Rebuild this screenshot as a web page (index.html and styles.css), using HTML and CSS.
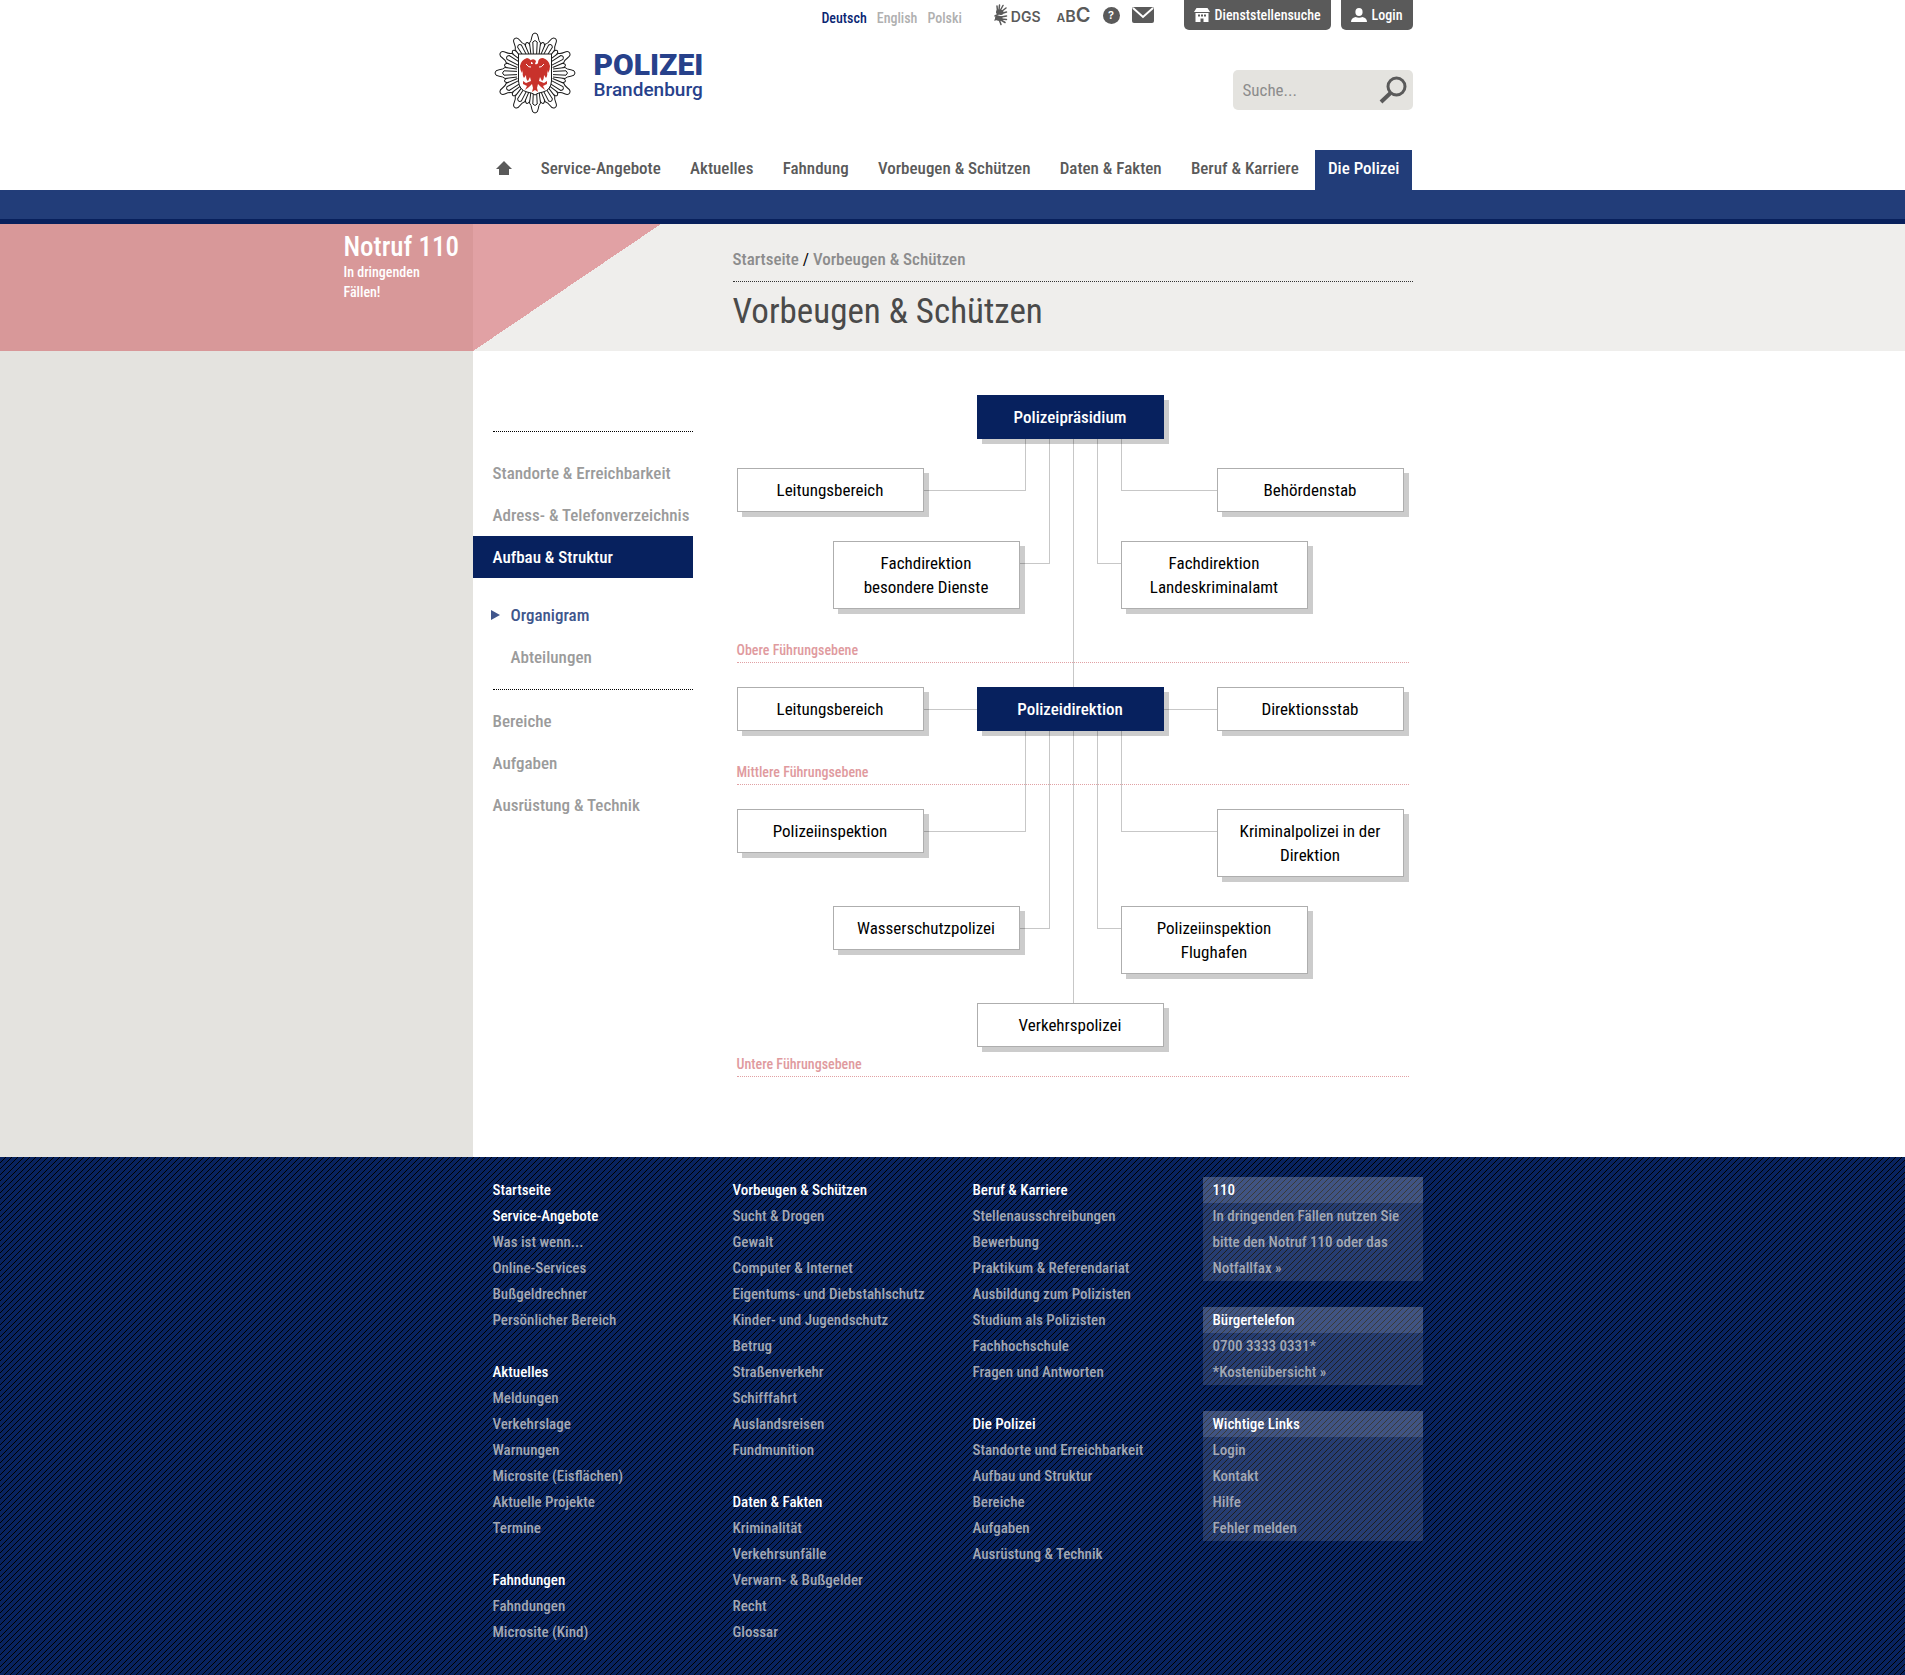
FILE: index.html
```html
<!DOCTYPE html>
<html lang="de">
<head>
<meta charset="utf-8">
<meta name="viewport" content="width=device-width, initial-scale=1">
<title>Organigramm – Polizei Brandenburg</title>
<link rel="stylesheet" href="styles.css">
</head>
<body>

<header class="site-header">
  <div class="wrap header-top">
    <a class="logo" href="#">
      <svg class="star" viewBox="-42 -42 84 84" width="84" height="84" aria-hidden="true">
        <defs>
          <path id="ray-small" d="M-5 -18 L-1.800 -30 Q0 -33 1.800 -30 L5 -18"/>
          <path id="ray-big" d="M-4 -18 L-5.500 -30 Q-3.600 -32 -3.200 -36 Q-2.800 -40 0 -40 Q2.800 -40 3.200 -36 Q3.600 -32 5.500 -30 L4 -18 M-1.600 -18 L-2.200 -31 Q0 -34 2.200 -31 L1.600 -18"/>
        </defs>
        <g fill="#fff" stroke="#1a1a1a" stroke-width="1">
          <g>
            <use href="#ray-small" transform="rotate(15)"/><use href="#ray-small" transform="rotate(45)"/><use href="#ray-small" transform="rotate(75)"/><use href="#ray-small" transform="rotate(105)"/><use href="#ray-small" transform="rotate(135)"/><use href="#ray-small" transform="rotate(165)"/><use href="#ray-small" transform="rotate(195)"/><use href="#ray-small" transform="rotate(225)"/><use href="#ray-small" transform="rotate(255)"/><use href="#ray-small" transform="rotate(285)"/><use href="#ray-small" transform="rotate(315)"/><use href="#ray-small" transform="rotate(345)"/>
          </g>
          <g>
            <use href="#ray-big"/><use href="#ray-big" transform="rotate(30)"/><use href="#ray-big" transform="rotate(60)"/><use href="#ray-big" transform="rotate(90)"/><use href="#ray-big" transform="rotate(120)"/><use href="#ray-big" transform="rotate(150)"/><use href="#ray-big" transform="rotate(180)"/><use href="#ray-big" transform="rotate(210)"/><use href="#ray-big" transform="rotate(240)"/><use href="#ray-big" transform="rotate(270)"/><use href="#ray-big" transform="rotate(300)"/><use href="#ray-big" transform="rotate(330)"/>
          </g>
          <path d="M-16.500 -19 H16.500 V8 Q16 17 8 19 Q2 20 0 22 Q-2 20 -8 19 Q-16 17 -16.500 8 Z"/>
        </g>
        <path fill="#c8322b" d="M-4 -13 Q-1 -15 1 -12 L0 -9 Q2 -8 3 -10 Q3 -15 8 -15 Q14 -13 15 -7 Q15 -3 13 0 L12 -3 Q13 2 11 5 L9 2 Q9 7 7 8 L5 4 L4 8 L9 10 L12 8 L12 11 L8 13 L10 17 L6 14 L3 11 L2 15 L3 19 L0 17 L-3 19 L-2 15 L-3 11 L-6 14 L-10 17 L-8 13 L-12 11 L-12 8 L-9 10 L-4 8 L-5 4 L-7 8 Q-9 7 -9 2 L-11 5 Q-13 2 -12 -3 L-13 0 Q-15 -3 -15 -7 Q-14 -13 -8 -15 Q-3 -14 -4 -9 L-2 -9 L-3 -11 L-6 -11 Z"/>
        <path fill="none" stroke="#fff" stroke-width="1" d="M-9 -9 Q-6 -5 -4 -6 M9 -9 Q6 -5 4 -6"/>
      </svg>
      <span class="wordmark"><strong>POLIZEI</strong><span>Brandenburg</span></span>
    </a>

    <div class="tools">
      <div class="meta">
        <nav class="languages" aria-label="Sprache">
          <a class="current" href="#">Deutsch</a>
          <a href="#">English</a>
          <a href="#">Polski</a>
        </nav>
        <div class="services">
          <a class="dgs" href="#">
            <svg width="14" height="22" viewBox="0 0 14 22" aria-hidden="true" fill="none" stroke="#5a5a5a" stroke-linecap="round">
              <path stroke-width="5" d="M4.500 8 L7 8.500 M3.500 14 L6 14.500"/>
              <path stroke-width="1.500" d="M3.500 7 L3 2 M5 6 L5.500 1 M6.500 6 L9 1.500 M7.500 7.500 L12 4 M7.500 9.500 L12.500 8 M4 10.500 L1 12 M7 13 L12.500 12 M7 15 L12.500 15.500 M7 16 L11 18.500 M5.500 16.500 L7 20.500 M4 14 L1 16"/>
            </svg>
            <span>DGS</span>
          </a>
          <a class="abc" href="#" aria-label="Schriftgröße"><small>A</small><span>B</span><big>C</big></a>
          <a class="help" href="#" aria-label="Hilfe">?</a>
          <a class="mail" href="#" aria-label="Kontakt">
            <svg width="22" height="16" viewBox="0 0 22 16" aria-hidden="true"><rect width="22" height="16" rx="2" fill="#5a5a5a"/><path d="M1 1 L11 10 L21 1" fill="none" stroke="#fff" stroke-width="2"/></svg>
          </a>
        </div>
        <div class="tabs">
          <a href="#">
            <svg width="16" height="14" viewBox="0 0 16 14" aria-hidden="true" fill="#fff"><path d="M2.500 0 H13.500 L16 4 H0 Z"/><path fill-rule="evenodd" d="M1.500 5 H14.500 V14 H9.500 V10.500 H6.500 V14 H1.500 Z M4 6.500 V8.500 H6 V6.500 Z M7 6.500 V8.500 H9 V6.500 Z M10 6.500 V8.500 H12 V6.500 Z"/></svg>
            Dienststellensuche
          </a>
          <a href="#">
            <svg width="16" height="14" viewBox="0 0 16 14" aria-hidden="true" fill="#fff"><ellipse cx="8" cy="4" rx="3.600" ry="4"/><path d="M0 14 Q0 10 4.500 9 Q8 10.500 11.500 9 Q16 10 16 14 Z"/></svg>
            Login
          </a>
        </div>
      </div>
      <form class="search" role="search">
        <input type="search" aria-label="Suche" placeholder="Suche...">
        <button type="submit" aria-label="Suchen">
          <svg width="28" height="28" viewBox="0 0 28 28" aria-hidden="true" fill="none" stroke="#5a5a5a"><circle cx="17.500" cy="10.500" r="8.500" stroke-width="3"/><path stroke-width="4" d="M11.500 17 L2 26"/></svg>
        </button>
      </form>
    </div>
  </div>

  <nav class="wrap main-nav" aria-label="Hauptnavigation">
    <a class="home" href="#" aria-label="Startseite"><svg width="16" height="14" viewBox="0 0 16 14" aria-hidden="true"><path fill="#5a5a5a" d="M8 0 L16 8 H13 V14 H3 V8 H0 Z"/></svg></a>
    <a href="#">Service-Angebote</a>
    <a href="#">Aktuelles</a>
    <a href="#">Fahndung</a>
    <a href="#">Vorbeugen &amp; Schützen</a>
    <a href="#">Daten &amp; Fakten</a>
    <a href="#">Beruf &amp; Karriere</a>
    <a class="active" href="#">Die Polizei</a>
  </nav>
</header>

<section class="banner">
  <aside class="emergency">
    <div>
      <strong>Notruf 110</strong>
      <p>In dringenden<br>Fällen!</p>
    </div>
  </aside>
  <div class="page-head">
    <div class="page-title">
      <nav class="breadcrumb" aria-label="Brotkrumen"><a href="#">Startseite</a> / <a href="#">Vorbeugen &amp; Schützen</a></nav>
      <h1>Vorbeugen &amp; Schützen</h1>
    </div>
  </div>
</section>

<div class="content">
  <div class="page">
    <nav class="side-nav" aria-label="Bereichsnavigation">
      <ul class="group">
        <li><a href="#">Standorte &amp; Erreichbarkeit</a></li>
        <li><a href="#">Adress- &amp; Telefonverzeichnis</a></li>
        <li class="active"><a href="#">Aufbau &amp; Struktur</a></li>
      </ul>
      <ul class="sub">
        <li class="current"><a href="#">Organigram</a></li>
        <li><a href="#">Abteilungen</a></li>
      </ul>
      <ul class="group rest">
        <li><a href="#">Bereiche</a></li>
        <li><a href="#">Aufgaben</a></li>
        <li><a href="#">Ausrüstung &amp; Technik</a></li>
      </ul>
    </nav>

    <main class="chart">
      <svg class="links" viewBox="0 0 672 682" width="672" height="682" aria-hidden="true" fill="none" stroke="#000" stroke-opacity=".22" shape-rendering="crispEdges">
        <path d="M288.500 44 V95.500 H187"/>
        <path d="M312.500 44 V168.500 H283"/>
        <path d="M336.500 44 V292"/>
        <path d="M360.500 44 V168.500 H384"/>
        <path d="M384.500 44 V95.500 H480"/>
        <path d="M187 314.500 H240 M427 314.500 H480"/>
        <path d="M288.500 336 V436.500 H187"/>
        <path d="M312.500 336 V533.500 H283"/>
        <path d="M336.500 336 V608"/>
        <path d="M360.500 336 V533.500 H384"/>
        <path d="M384.500 336 V436.500 H480"/>
      </svg>
      <a class="node centre lead row-1" href="#">Polizeipräsidium</a>
      <a class="node left row-2" href="#">Leitungsbereich</a>
      <a class="node right row-2" href="#">Behördenstab</a>
      <a class="node inner-left row-3" href="#">Fachdirektion<br>besondere Dienste</a>
      <a class="node inner-right row-3" href="#">Fachdirektion<br>Landeskriminalamt</a>
      <h2 class="level row-4">Obere Führungsebene</h2>
      <a class="node left row-5" href="#">Leitungsbereich</a>
      <a class="node centre lead row-5" href="#">Polizeidirektion</a>
      <a class="node right row-5" href="#">Direktionsstab</a>
      <h2 class="level row-6">Mittlere Führungsebene</h2>
      <a class="node left row-7" href="#">Polizeiinspektion</a>
      <a class="node right row-7" href="#">Kriminalpolizei in der<br>Direktion</a>
      <a class="node inner-left row-8" href="#">Wasserschutzpolizei</a>
      <a class="node inner-right row-8" href="#">Polizeiinspektion<br>Flughafen</a>
      <a class="node centre row-9" href="#">Verkehrspolizei</a>
      <h2 class="level last row-10">Untere Führungsebene</h2>
    </main>
  </div>
</div>

<footer class="site-footer">
  <div class="wrap footer-grid">
    <div class="links-col">
      <ul>
        <li><a class="head" href="#">Startseite</a></li>
        <li><a class="head" href="#">Service-Angebote</a></li>
        <li><a href="#">Was ist wenn...</a></li>
        <li><a href="#">Online-Services</a></li>
        <li><a href="#">Bußgeldrechner</a></li>
        <li><a href="#">Persönlicher Bereich</a></li>
      </ul>
      <ul>
        <li><a class="head" href="#">Aktuelles</a></li>
        <li><a href="#">Meldungen</a></li>
        <li><a href="#">Verkehrslage</a></li>
        <li><a href="#">Warnungen</a></li>
        <li><a href="#">Microsite (Eisflächen)</a></li>
        <li><a href="#">Aktuelle Projekte</a></li>
        <li><a href="#">Termine</a></li>
      </ul>
      <ul>
        <li><a class="head" href="#">Fahndungen</a></li>
        <li><a href="#">Fahndungen</a></li>
        <li><a href="#">Microsite (Kind)</a></li>
      </ul>
    </div>
    <div class="links-col">
      <ul>
        <li><a class="head" href="#">Vorbeugen &amp; Schützen</a></li>
        <li><a href="#">Sucht &amp; Drogen</a></li>
        <li><a href="#">Gewalt</a></li>
        <li><a href="#">Computer &amp; Internet</a></li>
        <li><a href="#">Eigentums- und Diebstahlschutz</a></li>
        <li><a href="#">Kinder- und Jugendschutz</a></li>
        <li><a href="#">Betrug</a></li>
        <li><a href="#">Straßenverkehr</a></li>
        <li><a href="#">Schifffahrt</a></li>
        <li><a href="#">Auslandsreisen</a></li>
        <li><a href="#">Fundmunition</a></li>
      </ul>
      <ul>
        <li><a class="head" href="#">Daten &amp; Fakten</a></li>
        <li><a href="#">Kriminalität</a></li>
        <li><a href="#">Verkehrsunfälle</a></li>
        <li><a href="#">Verwarn- &amp; Bußgelder</a></li>
        <li><a href="#">Recht</a></li>
        <li><a href="#">Glossar</a></li>
      </ul>
    </div>
    <div class="links-col">
      <ul>
        <li><a class="head" href="#">Beruf &amp; Karriere</a></li>
        <li><a href="#">Stellenausschreibungen</a></li>
        <li><a href="#">Bewerbung</a></li>
        <li><a href="#">Praktikum &amp; Referendariat</a></li>
        <li><a href="#">Ausbildung zum Polizisten</a></li>
        <li><a href="#">Studium als Polizisten</a></li>
        <li><a href="#">Fachhochschule</a></li>
        <li><a href="#">Fragen und Antworten</a></li>
      </ul>
      <ul>
        <li><a class="head" href="#">Die Polizei</a></li>
        <li><a href="#">Standorte und Erreichbarkeit</a></li>
        <li><a href="#">Aufbau und Struktur</a></li>
        <li><a href="#">Bereiche</a></li>
        <li><a href="#">Aufgaben</a></li>
        <li><a href="#">Ausrüstung &amp; Technik</a></li>
      </ul>
    </div>
    <div class="boxes">
      <section>
        <h2>110</h2>
        <p>In dringenden Fällen nutzen Sie<br>bitte den Notruf 110 oder das<br><a href="#">Notfallfax »</a></p>
      </section>
      <section>
        <h2>Bürgertelefon</h2>
        <p>0700 3333 0331*<br><a href="#">*Kostenübersicht »</a></p>
      </section>
      <section>
        <h2>Wichtige Links</h2>
        <ul>
          <li><a href="#">Login</a></li>
          <li><a href="#">Kontakt</a></li>
          <li><a href="#">Hilfe</a></li>
          <li><a href="#">Fehler melden</a></li>
        </ul>
      </section>
    </div>
  </div>
</footer>

</body>
</html>
```
FILE: styles.css
```css
:root {
  --navy: #07215e;
  --blue: #223d79;
  --grey: #5a5a5a;
  --sand: #e4e3df;
  --rose: #e1a1a4;
  --gutter: calc((100% - 960px) / 2);
}

* { box-sizing: border-box; }

body {
  margin: 0;
  background: #fff;
  color: #000;
  font: 400 17px/24px "Roboto Condensed", "Liberation Sans Narrow", Roboto, sans-serif;
}

a { color: inherit; text-decoration: none; }
ul { margin: 0; padding: 0; list-style: none; }
h1, h2, p { margin: 0; font-weight: 400; }
svg { display: block; }

.wrap {
  width: 920px;
  margin: 0 auto;
}

/* Header */
.header-top {
  display: flex;
  justify-content: space-between;
  height: 150px;
}
.logo {
  display: flex;
  align-items: flex-start;
  gap: 17px;
  padding-top: 31px;
}
.wordmark {
  display: flex;
  flex-direction: column;
  padding-top: 19px;
  color: #27418b;
  font-family: Roboto, sans-serif;
}
.wordmark strong { font-size: 30px; line-height: 29px; font-weight: 900; }
.wordmark span { font-size: 19px; line-height: 22px; font-weight: 500; }

.tools {
  display: flex;
  flex-direction: column;
  align-items: flex-end;
  gap: 40px;
}
.meta { display: flex; }
.languages {
  display: flex;
  gap: 10px;
  padding-top: 6px;
  font-size: 14px;
  font-weight: 500;
  color: #b0b0b0;
}
.languages .current { color: #0a2673; }
.services {
  display: flex;
  align-items: flex-start;
  gap: 12px;
  margin: 4px 30px 0 32px;
  color: var(--grey);
  font-family: Inter, sans-serif;
  font-weight: 600;
}
.dgs { display: flex; gap: 3px; margin-right: 4px; font-size: 14px; line-height: 26px; }
.abc { font-size: 16px; line-height: 22px; }
.abc small { font-size: 12px; }
.abc big { font-size: 20px; }
.help {
  width: 17px;
  height: 17px;
  margin-top: 3px;
  border-radius: 50%;
  background: var(--grey);
  color: #fff;
  font-size: 11px;
  line-height: 17px;
  text-align: center;
}
.mail { padding-top: 3px; }
.tabs { display: flex; gap: 10px; }
.tabs a {
  display: flex;
  align-items: center;
  gap: 5px;
  height: 30px;
  padding: 0 10px;
  border-radius: 0 0 5px 5px;
  background: var(--grey);
  color: #fff;
  font-size: 14px;
  font-weight: 500;
}
.search {
  display: flex;
  align-items: center;
  width: 180px;
  height: 40px;
  padding: 0 6px 0 10px;
  border-radius: 5px;
  background: var(--sand);
}
.search input {
  flex: 1;
  min-width: 0;
  padding: 0;
  border: 0;
  background: none;
  font: inherit;
  color: #555;
}
.search input::placeholder { color: #8c8c8c; opacity: 1; }
.search button { padding: 0; border: 0; background: none; cursor: pointer; }

.site-header {
  background: #fff;
  border-bottom: 5px solid #08205c;
}
.site-header::after {
  content: "";
  display: block;
  height: 29px;
  background: var(--blue);
}
.main-nav {
  display: flex;
  justify-content: space-between;
  height: 40px;
  color: var(--grey);
  font-weight: 500;
  line-height: 36px;
}
.main-nav .home { padding: 11px 0 0 3px; }
.main-nav .active {
  margin-left: -13px;
  padding: 0 13px;
  background: var(--blue);
  color: #fff;
}

/* Banner */
.banner {
  display: grid;
  grid-template-columns: 1fr 960px 1fr;
  min-height: 127px;
  background: #efeeec;
}
.emergency {
  display: flex;
  justify-content: flex-end;
  background: #d89899;
  color: #fff;
  font-weight: 500;
}
.emergency div { width: 129px; padding-top: 8px; }
.emergency strong { font-size: 27px; line-height: 30px; font-weight: 500; }
.emergency p { font-size: 14px; line-height: 20px; font-weight: 500; }
.page-head {
  padding: 20px 20px 0 260px;
  background: linear-gradient(to bottom right, var(--rose) 50%, transparent 50%) 0 0 / 188px 127px no-repeat;
}
.breadcrumb {
  padding: 3px 0 10px;
  border-bottom: 1px dotted #333;
}
.breadcrumb a { color: #8c8c8c; font-weight: 500; }
.page-title h1 {
  padding-top: 8px;
  color: #4a4a4a;
  font-size: 35px;
  line-height: 44px;
}

/* Content */
.content {
  background: linear-gradient(to right, var(--sand) var(--gutter), #fff var(--gutter));
}
.page {
  display: grid;
  grid-template-columns: 220px 672px;
  column-gap: 44px;
  width: 960px;
  min-height: 806px;
  margin: 0 auto;
  padding-top: 44px;
}
.side-nav {
  padding-top: 36px;
  color: #9b9b9b;
  font-weight: 500;
}
.side-nav .group a {
  display: block;
  padding-left: 20px;
  line-height: 42px;
}
.side-nav .group::before {
  content: "";
  display: block;
  margin: 0 0 20px 20px;
  border-top: 1px dotted #000;
}
.side-nav .rest::before { margin-bottom: 10px; }
.side-nav .active { background: var(--navy); color: #fff; }
.sub { padding: 16px 0 11px 38px; }
.sub li { display: flex; line-height: 42px; }
.sub .current { color: #41568c; }
.sub .current::before {
  content: "";
  align-self: center;
  margin: 0 11px 0 -20px;
  border: 5px solid transparent;
  border-left: 9px solid #41568c;
  border-right: 0;
}

/* Organisation chart: 28 columns of 24px */
.chart {
  display: grid;
  grid-template-columns: repeat(28, 24px);
  align-content: start;
  align-items: start;
  justify-self: start;
  position: relative;
}
.links { position: absolute; top: 0; left: 0; }
.node {
  grid-column-end: span 8;
  margin: 0 5px 29px 0;
  padding: 9px 4px;
  border: 1px solid #aeaeae;
  background: #fff;
  box-shadow: 5px 5px 0 rgba(0, 0, 0, .2);
  text-align: center;
  z-index: 1;
}
.lead {
  border-color: var(--navy);
  background: var(--navy);
  color: #fff;
  font-weight: 500;
}
.left { grid-column-start: 1; }
.inner-left { grid-column-start: 5; }
.centre { grid-column-start: 11; }
.inner-right { grid-column-start: 17; }
.right { grid-column-start: 21; }
.level {
  grid-column: 1 / -1;
  margin-bottom: 24px;
  border-bottom: 1px dotted var(--rose);
  color: #e09a9e;
  font-size: 14px;
  line-height: 24px;
  font-weight: 500;
}
.level.last { margin: -24px 0 0; }
.row-1 { grid-row: 1; }
.row-2 { grid-row: 2; }
.row-3 { grid-row: 3; }
.row-4 { grid-row: 4; }
.row-5 { grid-row: 5; }
.row-6 { grid-row: 6; }
.row-7 { grid-row: 7; }
.row-8 { grid-row: 8; }
.row-9 { grid-row: 9; }
.row-10 { grid-row: 10; }

/* Footer */
.site-footer {
  background: linear-gradient(to bottom right, transparent 45%, #000 45%, #000 55%, transparent 55%) 0 0 / 6px 6px #08235f;
  padding: 20px 0 32px;
  color: #a3a8b3;
  font-size: 15px;
  font-weight: 500;
  line-height: 26px;
}
.site-footer p { font-weight: 500; }
.footer-grid {
  display: grid;
  grid-template-columns: repeat(3, 240px) 210px;
}
.links-col ul + ul { margin-top: 26px; }
.site-footer .head { color: #fff; }
.boxes {
  display: flex;
  flex-direction: column;
  gap: 26px;
  margin-left: -10px;
}
.boxes section { background: rgba(255, 255, 255, .12); }
.boxes h2 {
  padding: 0 10px;
  background: rgba(255, 255, 255, .12);
  color: #fff;
  font-size: 15px;
  line-height: 26px;
  font-weight: 500;
}
.boxes p, .boxes ul { padding: 0 10px; }
```
